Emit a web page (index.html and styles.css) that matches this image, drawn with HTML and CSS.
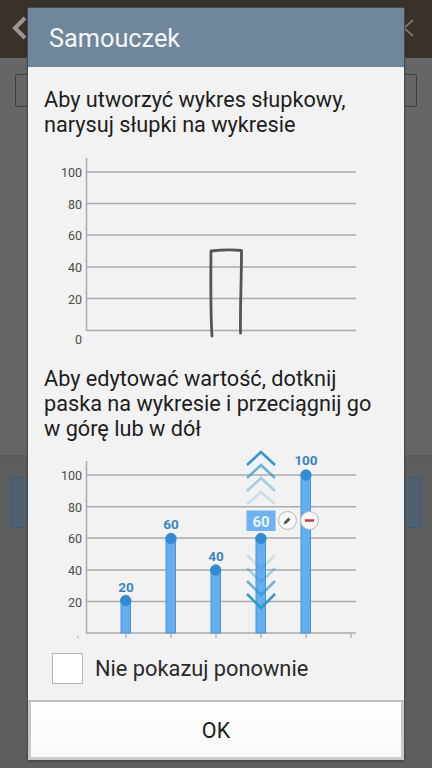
FILE: index.html
```html
<!DOCTYPE html>
<html lang="pl">
<head>
<meta charset="utf-8">
<title>Samouczek</title>
<link rel="stylesheet" href="styles.css">
</head>
<body>
<div class="screen">
  <header class="topbar">
    <svg class="back" width="20" height="26" viewBox="0 0 20 26"><path d="M15 3 5 13l10 10" fill="none" stroke="#9a968f" stroke-width="4"/></svg>
    <svg class="close" width="14" height="20" viewBox="0 0 14 20"><path d="M12 2 3 10l9 8M3 10" fill="none" stroke="#77726b" stroke-width="2"/></svg>
  </header>
  <div class="upper">
    <div class="field"></div>
  </div>
  <div class="lower">
    <div class="bluebox"></div>
  </div>
</div>

<section class="dialog">
  <h1 class="title">Samouczek</h1>
  <div class="body">
    <p class="hint">Aby utworzyć wykres słupkowy,<br>narysuj słupki na wykresie</p>
    <svg class="chart chart-one" width="376" height="200" viewBox="28 150 376 200">
      <g class="grid">
        <path d="M86.5 158V331"/>
        <path d="M87 172H356M87 203.5H356M87 235H356M87 267H356M87 298.5H356M87 330.5H356"/>
      </g>
      <g class="axis">
        <text x="82" y="177">100</text>
        <text x="82" y="208.500">80</text>
        <text x="82" y="240">60</text>
        <text x="82" y="272">40</text>
        <text x="82" y="303.500">20</text>
        <text x="82" y="344">0</text>
      </g>
      <path class="stroke" d="M212 336C211 320 210.500 300 211 251C220 250 232 249.500 241.500 250.500C241.500 280 240 310 240.500 333"/>
    </svg>
    <p class="hint hint-two">Aby edytować wartość, dotknij<br>paska na wykresie i przeciągnij go<br>w górę lub w dół</p>
    <svg class="chart chart-two" width="376" height="195" viewBox="28 445 376 195">
      <g class="grid">
        <path d="M86.500 461V634"/>
        <path d="M87 475H356M87 506.700H356M87 538H356M87 570H356M87 601.500H356M87 633H356"/>
      </g>
      <g class="axis">
        <text x="82" y="480">100</text>
        <text x="82" y="512">80</text>
        <text x="82" y="543">60</text>
        <text x="82" y="575">40</text>
        <text x="82" y="606.500">20</text>
      </g>
      <path class="tick" d="M126 634v4M171 634v4M216 634v4M261 634v4M306 634v4M351 634v4M77 637h2"/>
      <g class="bars">
        <rect x="121" y="600" width="9.500" height="33"/>
        <rect x="166" y="538" width="9.500" height="95"/>
        <rect x="211" y="570" width="9.500" height="63"/>
        <rect x="256" y="538" width="9.500" height="95"/>
        <rect x="301" y="475" width="9.500" height="158"/>
      </g>
      <g class="knobs">
        <circle cx="125.700" cy="600.500" r="5.200"/>
        <circle cx="171" cy="538.500" r="5.200"/>
        <circle cx="215.700" cy="570" r="5.200"/>
        <circle cx="261" cy="538.500" r="5.200"/>
        <circle cx="306" cy="475" r="5.200"/>
      </g>
      <g class="vals">
        <text x="126" y="592">20</text>
        <text x="171" y="529">60</text>
        <text x="216" y="561">40</text>
        <text x="306" y="465">100</text>
      </g>
      <g class="chev">
        <path class="c4" d="M247 504 261 492l14 12"/>
        <path class="c3" d="M247 491 261 478l14 13"/>
        <path class="c2" d="M247 478 261 465l14 13"/>
        <path class="c1" d="M247 465 261 452l14 13"/>
        <path class="c4" d="M247 555 261 569l14-14"/>
        <path class="c3" d="M247 568 261 582l14-14"/>
        <path class="c2" d="M247 581 261 595l14-14"/>
        <path class="c1" d="M247 594 261 608l14-14"/>
      </g>
      <rect class="valbox" x="246.500" y="510.500" width="29" height="20.500"/>
      <text class="valtext" x="261" y="526.500">60</text>
      <circle class="pill" cx="287.500" cy="520.500" r="9"/>
      <path class="pencil" d="M283.500 524.500l1-3 4-4 2 2-4 4z"/>
      <circle class="pill" cx="309.500" cy="520.500" r="9"/>
      <path class="minus" d="M305 520.500h9"/>
    </svg>
    <label class="check">
      <span class="box"></span>
      <span class="check-label">Nie pokazuj ponownie</span>
    </label>
  </div>
  <div class="actions">
    <div class="ok">OK</div>
  </div>
</section>
</body>
</html>
```

FILE: styles.css
```css
* { box-sizing: border-box; }
html, body { margin: 0; padding: 0; }
body {
  width: 432px;
  height: 768px;
  overflow: hidden;
  position: relative;
  background: #666;
  font-family: Roboto, "Liberation Sans", sans-serif;
}
.screen { display: flex; flex-direction: column; height: 768px; }
.topbar {
  height: 58px;
  background: #39322a;
  display: flex;
  align-items: center;
  justify-content: space-between;
  padding: 0 17px 3px 10px;
}
.upper {
  height: 399px;
  padding: 16px 15px 0 15px;
  background: #666;
  border-bottom: 2px solid #595959;
}
.field {
  height: 33px;
  border: 1px solid #3e3e3e;
  border-radius: 2px;
}
.lower { flex: 1; background: #5e5e5e; padding: 20px 11px 0; }
.bluebox {
  height: 51px;
  background: #50606c;
  border: 1px solid #41596d;
}
.dialog {
  position: absolute;
  left: 28px;
  top: 8px;
  width: 376px;
  height: 752px;
  display: flex;
  flex-direction: column;
  background: #f2f2f2;
  box-shadow: 0 0 0 1px #4a4a4a, 0 1px 3px rgba(0,0,0,.45);
  border-radius: 2px;
}
.title {
  margin: 0;
  height: 59px;
  padding-left: 21px;
  background: #6f879c;
  color: #f4f6f8;
  font-size: 25.300px;
  font-weight: 400;
  line-height: 61px;
  border-radius: 2px 2px 0 0;
}
.body { flex: 1; display: flex; flex-direction: column; padding-top: 20px; }
.hint {
  margin: 0;
  padding-left: 16px;
  color: #1d1d1d;
  font-size: 21.700px;
  line-height: 25px;
}
.chart { display: block; flex: none; }
.chart-one { margin-top: 13px; }
.hint-two { margin-top: 16px; }
.chart-two { margin-top: 4px; }
.grid path { fill: none; stroke: #ababab; stroke-width: 1.500; }
.axis text {
  fill: #4c4c4c;
  font-size: 12.500px;
  text-anchor: end;
}
.stroke {
  fill: none;
  stroke: #555;
  stroke-width: 2.800;
  stroke-linejoin: round;
  stroke-linecap: round;
}
.tick { fill: none; stroke: #9a9a9a; stroke-width: 1; }
.bars rect { fill: #62aeef; stroke: #4a94d2; stroke-width: 1; }
.knobs circle { fill: #2f8bd8; stroke: #3f8dcc; stroke-width: 1; }
.vals text {
  fill: #3a84c2;
  font-size: 13.500px;
  font-weight: 700;
  text-anchor: middle;
}
.chev path { fill: none; stroke: #2f97cd; stroke-width: 2.500; }
.chev .c2 { opacity: .7; }
.chev .c3 { opacity: .4; }
.chev .c4 { opacity: .2; }
.valbox { fill: #6fb2ef; }
.valtext {
  fill: #eaf4fd;
  font-size: 15px;
  font-weight: 700;
  text-anchor: middle;
}
.pill { fill: #f8f8f8; stroke: #b8b8b8; stroke-width: 1; }
.pencil { fill: #555; }
.minus { fill: none; stroke: #d0343f; stroke-width: 2.500; }
.check {
  display: flex;
  align-items: center;
  gap: 12px;
  padding-left: 24px;
  margin-top: 13px;
}
.box {
  width: 31px;
  height: 31px;
  background: #fff;
  border: 1px solid #b5b5b5;
}
.check-label { color: #2a2a2a; font-size: 21.800px; line-height: 31px; }
.actions {
  height: 60px;
  padding: 0 3px 3px;
  background: #c8c8c8;
  border-top: 2px solid #bdbdbd;
}
.ok {
  height: 100%;
  background: linear-gradient(#fff, #f8f8f8);
  color: #1d1d1d;
  font-size: 21.500px;
  line-height: 58px;
  text-align: center;
}
```
